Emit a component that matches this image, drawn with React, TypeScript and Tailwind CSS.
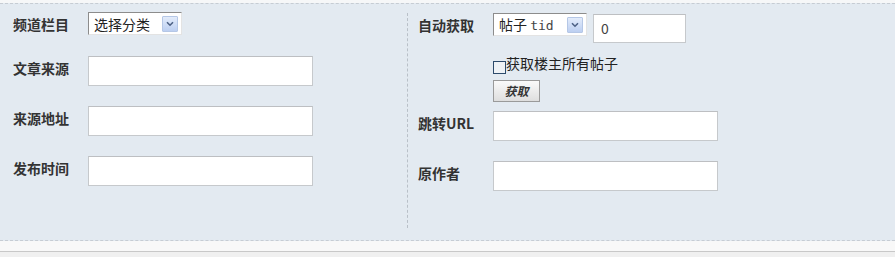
import React from "react";

const font = { fontFamily: '"Noto Sans CJK SC", "Liberation Sans", sans-serif' };

function Arrow() {
  return (
    <div className="w-[16px] h-[16px] border border-[#b5c7e6] bg-gradient-to-b from-[#e3ecfb] to-[#bccff1] flex items-center justify-center rounded-[1px]">
      <svg width="8" height="6" viewBox="0 0 8 6">
        <path d="M1 1.2 L4 4.2 L7 1.2" fill="none" stroke="#4d6185" strokeWidth="1.6" />
      </svg>
    </div>
  );
}

function Select({ children }: { children: React.ReactNode }) {
  return (
    <div className="w-[94px] h-[23px] bg-white border border-[#8c8c8c] border-r-[#e3e3e3] border-b-[#e3e3e3] flex items-center justify-between pl-[5px] pr-[3px]">
      <span className="text-[14px] leading-none text-[#222]">{children}</span>
      <Arrow />
    </div>
  );
}

function Input({ w = "w-[225px]", h = "h-[30px]", children }: { w?: string; h?: string; children?: React.ReactNode }) {
  return (
    <div className={`${w} ${h} bg-white border border-[#c6c9cc] border-t-[#bdbfc2] flex items-center pl-[7px] text-[14px] text-[#444]`}>
      {children}
    </div>
  );
}

function Label({ children }: { children: React.ReactNode }) {
  return <div className="w-[75px] shrink-0 text-[14px] font-bold text-[#333] leading-[16px]">{children}</div>;
}

export default function App() {
  return (
    <div className="w-[895px] h-[257px] bg-[#f0f0f0] flex flex-col" style={font}>
      <div className="h-[3px] bg-[#f6f7f8]" />
      <div className="h-[238px] bg-[#e3eaf1] border-t border-b border-dashed border-[#c6ccd3] flex">
        {/* left column */}
        <div className="w-[407px] pl-[13px] pt-[8px] flex flex-col">
          <div className="flex items-center h-[23px]">
            <Label>频道栏目</Label>
            <Select>选择分类</Select>
          </div>
          <div className="flex items-start mt-[21px]">
            <div className="pt-[4px]"><Label>文章来源</Label></div>
            <Input />
          </div>
          <div className="flex items-start mt-[20px]">
            <div className="pt-[4px]"><Label>来源地址</Label></div>
            <Input />
          </div>
          <div className="flex items-start mt-[20px]">
            <div className="pt-[4px]"><Label>发布时间</Label></div>
            <Input />
          </div>
        </div>
        {/* right column */}
        <div className="mt-[9px] mb-[12px] border-l border-dashed border-[#b9c0c8] pl-[10px] flex flex-col flex-1">
          <div className="flex items-start">
            <div className="pt-[4px]"><Label>自动获取</Label></div>
            <Select>
              <span>帖子 <span className="text-[13px] text-[#444]" style={{ fontFamily: '"DejaVu Sans Mono", monospace' }}>tid</span></span>
            </Select>
            <div className="ml-[6px] mt-[1px]">
              <Input w="w-[93px]" h="h-[29px]">0</Input>
            </div>
          </div>
          <div className="ml-[75px] mt-[12px] flex items-start">
            <div className="w-[13px] h-[13px] mt-[6px] border border-[#2c4a6b] bg-[#eef2f6]" />
            <span className="text-[14px] leading-[16px] text-[#222]">获取楼主所有帖子</span>
          </div>
          <div className="ml-[75px] mt-[6px]">
            <div className="w-[47px] h-[22px] border border-[#9a9a9a] bg-gradient-to-b from-[#fafafa] to-[#dedede] flex items-center justify-center text-[12px] font-bold italic text-[#333]">
              获取
            </div>
          </div>
          <div className="flex items-start mt-[9px]">
            <div className="pt-[4px]"><Label>跳转URL</Label></div>
            <Input />
          </div>
          <div className="flex items-start mt-[20px]">
            <div className="pt-[4px]"><Label>原作者</Label></div>
            <Input />
          </div>
        </div>
      </div>
      <div className="h-[11px] bg-[#f8f8f8] border-b border-[#c8c8c8]" />
    </div>
  );
}
